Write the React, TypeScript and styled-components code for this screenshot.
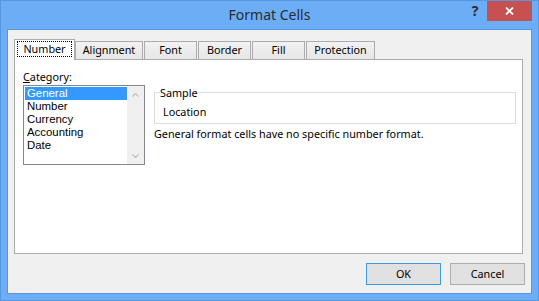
import React from "react";
import styled, { createGlobalStyle } from "styled-components";

const GlobalStyle = createGlobalStyle`
  html, body { margin: 0; padding: 0; background: #6badf6; }
  body { font-family: "Noto Sans", "Open Sans", sans-serif; font-size: 10.8px; color: #000; }
  * { box-sizing: border-box; }
`;

const Frame = styled.div`
  width: 539px;
  height: 301px;
  background: #6badf6;
  border: 1px solid #5a96dc;
  display: flex;
  flex-direction: column;
`;

const TitleBar = styled.div`
  height: 28px;
  flex: none;
  display: grid;
  grid-template-columns: 1fr auto 1fr;
  padding: 0 6px;
`;

const Title = styled.div`
  grid-column: 2;
  font-size: 14px;
  line-height: 28px;
  color: #2b2b2b;
  white-space: nowrap;
`;

const Controls = styled.div`
  grid-column: 3;
  justify-self: end;
  display: flex;
  align-items: flex-start;
`;

const HelpButton = styled.div`
  width: 26px;
  height: 20px;
  padding-left: 2px;
  font-size: 14px;
  font-weight: 700;
  line-height: 20px;
  text-align: center;
  color: #2b2b2b;
`;

const CloseButton = styled.div`
  width: 45px;
  height: 20px;
  background: #c75050;
  display: flex;
  align-items: center;
  justify-content: center;
`;

const Client = styled.div`
  flex: 1;
  margin: 0 6px 6px;
  border: 1px solid #5a96dc;
  background: #f0f0f0;
  display: flex;
  flex-direction: column;
  padding: 9px 6px 8px 6px;
`;

const TabRow = styled.div`
  height: 20px;
  flex: none;
  display: flex;
  align-items: flex-end;
  position: relative;
  z-index: 1;
`;

const Tab = styled.div<{ $active?: boolean; $w: number }>`
  width: ${(p) => p.$w}px;
  height: ${(p) => (p.$active ? 21 : 18)}px;
  margin-bottom: ${(p) => (p.$active ? -1 : 0)}px;
  margin-left: ${(p) => (p.$active ? 0 : 1)}px;
  margin-right: ${(p) => (p.$active ? -1 : 0)}px;
  border: 1px solid #acacac;
  border-bottom: none;
  background: ${(p) =>
    p.$active ? "#ffffff" : "linear-gradient(#f2f2f2, #e6e6e6)"};
  padding: ${(p) => (p.$active ? "1px 2px 0" : "0")};
  text-align: center;
  line-height: 16px;
  white-space: nowrap;
`;

const FocusLabel = styled.div`
  border: 1px dotted #000;
  height: 16px;
  line-height: 14px;
  text-align: center;
`;

const Panel = styled.div`
  flex: 1;
  margin-right: 2px;
  border: 1px solid #acacac;
  background: #fff;
  display: flex;
  gap: 9px;
  padding: 9px 6px 0 8px;
`;

const LeftColumn = styled.div`
  width: 122px;
  display: flex;
  flex-direction: column;
`;

const FieldLabel = styled.div`
  line-height: 15px;
  margin-bottom: 1px;
`;

const ListBox = styled.div`
  width: 122px;
  height: 80px;
  border: 1px solid #828790;
  display: flex;
`;

const Items = styled.ul`
  flex: 1;
  margin: 0;
  padding: 1px 0 0 1px;
  list-style: none;
  font-family: "Liberation Sans", Arial, sans-serif;
  font-size: 11.4px;
`;

const Item = styled.li<{ $selected?: boolean }>`
  height: 13px;
  line-height: 13px;
  padding-left: 2px;
  background: ${(p) => (p.$selected ? "#3399ff" : "transparent")};
  color: ${(p) => (p.$selected ? "#fff" : "#000")};
  white-space: nowrap;
`;

const ScrollBar = styled.div`
  width: 17px;
  background: #f0f0f0;
  display: flex;
  flex-direction: column;
  justify-content: space-between;
`;

const ScrollArrow = styled.div`
  height: 17px;
  display: flex;
  align-items: center;
  justify-content: center;
`;

const RightColumn = styled.div`
  flex: 1;
  padding-top: 16px;
  display: flex;
  flex-direction: column;
`;

const GroupBox = styled.fieldset`
  margin: 0;
  min-width: 0;
  padding: 4px 0 4px 5px;
  border: 1px solid #dcdcdc;
`;

const GroupLegend = styled.legend`
  padding: 0;
  line-height: 15px;
`;

const SampleValue = styled.div`
  padding-left: 3px;
  line-height: 15px;
`;

const Description = styled.div`
  margin-top: 2px;
  line-height: 15px;
`;

const ButtonRow = styled.div`
  flex: none;
  display: flex;
  justify-content: flex-end;
  gap: 9px;
  margin-top: 9px;
`;

const Button = styled.button<{ $primary?: boolean }>`
  width: 75px;
  height: 22px;
  padding: 0;
  margin: 0;
  border: 1px solid ${(p) => (p.$primary ? "#3c9ae8" : "#adadad")};
  background: #e1e1e1;
  font-family: "Noto Sans", "Open Sans", sans-serif;
  font-size: 10.8px;
  color: #000;
  line-height: 20px;
`;

const Chevron = ({ up }: { up?: boolean }) => (
  <svg width="7" height="4" viewBox="0 0 7 4">
    <polyline
      points={up ? "0.5,3.5 3.5,0.5 6.5,3.5" : "0.5,0.5 3.5,3.5 6.5,0.5"}
      fill="none"
      stroke="#c2c2c2"
      strokeWidth="1.3"
    />
  </svg>
);

const tabs: { label: string; w: number }[] = [
  { label: "Number", w: 61 },
  { label: "Alignment", w: 68 },
  { label: "Font", w: 53 },
  { label: "Border", w: 53 },
  { label: "Fill", w: 53 },
  { label: "Protection", w: 69 },
];

const categories = ["General", "Number", "Currency", "Accounting", "Date"];

export default function App() {
  return (
    <>
      <GlobalStyle />
      <Frame>
        <TitleBar>
          <Title>Format Cells</Title>
          <Controls>
            <HelpButton>?</HelpButton>
            <CloseButton>
              <svg width="9" height="8" viewBox="0 0 9 8">
                <path d="M1 0.5 L8 7.5 M8 0.5 L1 7.5" stroke="#fff" strokeWidth="1.8" />
              </svg>
            </CloseButton>
          </Controls>
        </TitleBar>
        <Client>
          <TabRow>
            {tabs.map((t, i) =>
              i === 0 ? (
                <Tab key={t.label} $active $w={t.w}>
                  <FocusLabel>{t.label}</FocusLabel>
                </Tab>
              ) : (
                <Tab key={t.label} $w={t.w}>
                  {t.label}
                </Tab>
              )
            )}
          </TabRow>
          <Panel>
            <LeftColumn>
              <FieldLabel>
                <u>C</u>ategory:
              </FieldLabel>
              <ListBox>
                <Items>
                  {categories.map((c, i) => (
                    <Item key={c} $selected={i === 0}>
                      {c}
                    </Item>
                  ))}
                </Items>
                <ScrollBar>
                  <ScrollArrow>
                    <Chevron up />
                  </ScrollArrow>
                  <ScrollArrow>
                    <Chevron />
                  </ScrollArrow>
                </ScrollBar>
              </ListBox>
            </LeftColumn>
            <RightColumn>
              <GroupBox>
                <GroupLegend>Sample</GroupLegend>
                <SampleValue>Location</SampleValue>
              </GroupBox>
              <Description>
                General format cells have no specific number format.
              </Description>
            </RightColumn>
          </Panel>
          <ButtonRow>
            <Button $primary>OK</Button>
            <Button>Cancel</Button>
          </ButtonRow>
        </Client>
      </Frame>
    </>
  );
}
